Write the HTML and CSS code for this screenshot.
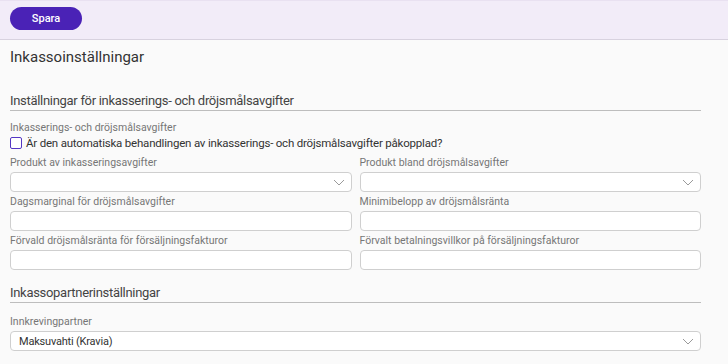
FILE: index.html
```html
<!DOCTYPE html>
<html lang="sv">
<head>
    <meta charset="UTF-8">
    <meta name="viewport" content="width=device-width, initial-scale=1.0">
    <title>Inkassoinställningar</title>
    <link rel="stylesheet" href="styles.css">
</head>
<body>
    <div class="toolbar">
        <button class="btn-save">Spara</button>
    </div>

    <div class="content">
        <h1 class="page-title">Inkassoinställningar</h1>

        <h2 class="section-title">Inställningar för inkasserings- och dröjsmålsavgifter</h2>

        <div class="field-label">Inkasserings- och dröjsmålsavgifter</div>
        <label class="check-row">
            <span class="check-box"></span>
            <span>Är den automatiska behandlingen av inkasserings- och dröjsmålsavgifter påkopplad?</span>
        </label>

        <div class="form-grid">
            <div class="field">
                <div class="field-label">Produkt av inkasseringsavgifter</div>
                <div class="input select">
                    <svg class="chevron" width="12" height="7" viewBox="0 0 12 7"><path d="M1 1 L6 6 L11 1" fill="none" stroke="#9a9a9a" stroke-width="1"/></svg>
                </div>
            </div>
            <div class="field">
                <div class="field-label">Produkt bland dröjsmålsavgifter</div>
                <div class="input select">
                    <svg class="chevron" width="12" height="7" viewBox="0 0 12 7"><path d="M1 1 L6 6 L11 1" fill="none" stroke="#9a9a9a" stroke-width="1"/></svg>
                </div>
            </div>
            <div class="field">
                <div class="field-label">Dagsmarginal för dröjsmålsavgifter</div>
                <div class="input"></div>
            </div>
            <div class="field">
                <div class="field-label">Minimibelopp av dröjsmålsränta</div>
                <div class="input"></div>
            </div>
            <div class="field">
                <div class="field-label">Förvald dröjsmålsränta för försäljningsfakturor</div>
                <div class="input"></div>
            </div>
            <div class="field">
                <div class="field-label">Förvalt betalningsvillkor på försäljningsfakturor</div>
                <div class="input"></div>
            </div>
        </div>

        <h2 class="section-title second">Inkassopartnerinställningar</h2>

        <div class="field">
            <div class="field-label">Innkrevingpartner</div>
            <div class="input select">
                <span class="value">Maksuvahti (Kravia)</span>
                <svg class="chevron" width="12" height="7" viewBox="0 0 12 7"><path d="M1 1 L6 6 L11 1" fill="none" stroke="#9a9a9a" stroke-width="1"/></svg>
            </div>
        </div>
    </div>
</body>
</html>
```

FILE: styles.css
```css
* {
    box-sizing: border-box;
}
body {
    margin: 0;
    font-family: Roboto, "Noto Sans", sans-serif;
    background: #fafafa;
    color: #333;
}
.toolbar {
    height: 40px;
    padding: 6px 10px;
    background: #f2ecf8;
    border-top: 1px solid #e9e1f1;
    border-bottom: 1px solid #d8d2df;
}
.btn-save {
    width: 72px;
    height: 23px;
    margin-top: -1px;
    border: none;
    border-radius: 12px;
    background: #4a22b6;
    color: white;
    font-family: inherit;
    font-size: 11px;
    font-weight: 500;
    cursor: pointer;
}
.content {
    padding: 0 27px 0 10px;
}
.page-title {
    margin: 7px 0 0;
    font-size: 15px;
    line-height: 20px;
    font-weight: 400;
    color: #333;
}
.section-title {
    margin: 25px 0 0;
    height: 19px;
    font-size: 13px;
    line-height: 18px;
    letter-spacing: -0.3px;
    font-weight: 400;
    color: #444;
    border-bottom: 1px solid #bdbdbd;
}
.section-title.second {
    margin-top: 14px;
}
.field-label {
    font-size: 10.5px;
    line-height: 14px;
    color: #767676;
}
.section-title + .field-label {
    margin-top: 10px;
}
.section-title + .field {
    margin-top: 12px;
}
.check-row {
    display: flex;
    align-items: center;
    gap: 4px;
    margin-top: 1px;
    font-size: 11.5px;
    line-height: 14px;
    letter-spacing: -0.2px;
    color: #333;
}
.check-box {
    width: 12px;
    height: 12px;
    border: 1px solid #5436c4;
    border-radius: 2px;
    background: white;
}
.form-grid {
    display: grid;
    grid-template-columns: 1fr 1fr;
    column-gap: 8px;
    row-gap: 3px;
    margin-top: 6px;
}
.field-label + .input {
    margin-top: 2px;
}
.input {
    height: 20px;
    background: white;
    border: 1px solid #cfcfcf;
    border-radius: 4px;
    display: flex;
    align-items: center;
    padding: 0 6px 0 8px;
}
.select .chevron {
    margin-left: auto;
}
.value {
    font-size: 11px;
    letter-spacing: -0.2px;
    color: #333;
}
```
